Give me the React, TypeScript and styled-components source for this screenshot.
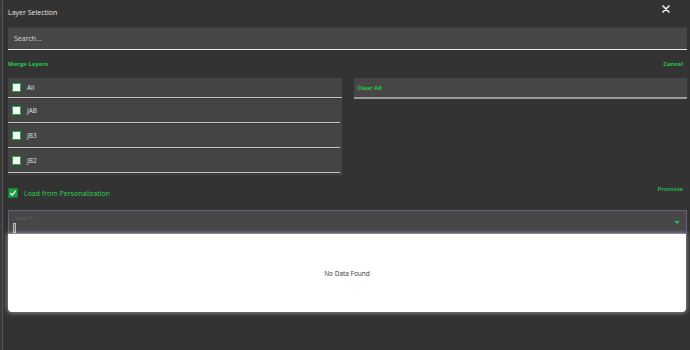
import * as React from "react";
import styled, { createGlobalStyle } from "styled-components";

const GlobalStyle = createGlobalStyle`
  html, body {
    margin: 0;
    padding: 0;
    background: #333333;
  }
  body {
    font-family: "Open Sans", "Liberation Sans", sans-serif;
  }
`;

const layers = ["JAB", "JB3", "JB2"];

export default function App() {
  return (
    <>
      <GlobalStyle />
      <Dialog>
        <Header>
          <Title>Layer Selection</Title>
          <CloseButton aria-label="close">
            <svg width="8" height="8" viewBox="0 0 8 8">
              <path d="M1 1 L7 7 M7 1 L1 7" stroke="#f2f2f2" strokeWidth="1.6" strokeLinecap="round" />
            </svg>
          </CloseButton>
        </Header>

        <SearchInput placeholder="Search..." />

        <ActionRow>
          <LinkButton $bold>Merge Layers</LinkButton>
          <LinkButton $bold>Cancel</LinkButton>
        </ActionRow>

        <Columns>
          <LayerPanel>
            <LayerRow $head>
              <Box />
              <RowLabel>All</RowLabel>
            </LayerRow>
            {layers.map(name => (
              <LayerRow key={name}>
                <Box />
                <RowLabel>{name}</RowLabel>
              </LayerRow>
            ))}
          </LayerPanel>
          <ClearPanel>
            <LinkButton $bold>Clear All</LinkButton>
          </ClearPanel>
        </Columns>

        <OptionRow>
          <CheckLabel>
            <CheckedBox>
              <svg width="8" height="8" viewBox="0 0 8 8">
                <path d="M1.3 4.2 L3.2 6 L6.8 1.8" stroke="#fff" strokeWidth="1.3" fill="none" />
              </svg>
            </CheckedBox>
            Load from Personalization
          </CheckLabel>
          <PromoteButton>Promote</PromoteButton>
        </OptionRow>

        <Select>
          <SelectBody>
            <SelectPlaceholder>Search</SelectPlaceholder>
            <Caret />
          </SelectBody>
          <Caret as="span" $arrow />
        </Select>
        <DropPanel>
          <EmptyText>No Data Found</EmptyText>
        </DropPanel>
      </Dialog>
    </>
  );
}

const Dialog = styled.div`
  width: 690px;
  height: 350px;
  box-sizing: border-box;
  background: #333333;
  border-left: 2px solid #3a3a3a;
  box-shadow: inset 1px 0 0 #565656;
  padding: 0 3px 0 6px;
  display: flex;
  flex-direction: column;
`;

const Header = styled.div`
  height: 27px;
  display: flex;
  align-items: center;
  justify-content: space-between;
`;

const Title = styled.div`
  font-size: 7px;
  color: #e6e6e6;
  margin-top: -3px;
`;

const CloseButton = styled.div`
  width: 8px;
  height: 8px;
  margin-right: 17px;
  margin-top: -10px;
  display: flex;
`;

const SearchInput = styled.input`
  height: 23px;
  box-sizing: border-box;
  border: none;
  border-top: 1px solid #3c3c3c;
  border-bottom: 1px solid #e8e8e8;
  background: #474747;
  padding: 0 6px;
  font-family: "Open Sans", "Liberation Sans", sans-serif;
  font-size: 7px;
  color: #e0e0e0;
  outline: none;
  &::placeholder {
    color: #d8d8d8;
  }
`;

const ActionRow = styled.div`
  height: 28px;
  display: flex;
  align-items: center;
  justify-content: space-between;
  padding-right: 4px;
`;

const LinkButton = styled.span<{ $bold?: boolean }>`
  font-size: 6px;
  font-weight: ${p => (p.$bold ? 700 : 400)};
  color: #22c94c;
`;

const Columns = styled.div`
  display: grid;
  grid-template-columns: 334px 1fr;
  gap: 12px;
  align-items: start;
`;

const LayerPanel = styled.div`
  background: #444444;
  padding-bottom: 2px;
`;

const LayerRow = styled.div<{ $head?: boolean }>`
  height: ${p => (p.$head ? 19 : 24)}px;
  display: flex;
  align-items: center;
  gap: 6px;
  padding-left: 4px;
  border-bottom: 1px solid #c4c4c4;
  box-shadow: 0 1px 0 #383838;
  margin-right: ${p => (p.$head ? 0 : 2)}px;
`;

const Box = styled.span`
  width: 7px;
  height: 7px;
  background: #ffffff;
  border: 1px solid #16b13a;
  flex: none;
`;

const RowLabel = styled.span`
  font-size: 6.5px;
  color: #e2e2e2;
`;

const ClearPanel = styled.div`
  height: 19px;
  background: #464646;
  border-bottom: 2px solid #9a9a9a;
  display: flex;
  align-items: center;
  padding-left: 3px;
`;

const OptionRow = styled.div`
  height: 34px;
  margin-top: 1px;
  display: flex;
  align-items: center;
  justify-content: space-between;
  padding-right: 4px;
`;

const CheckLabel = styled.label`
  display: flex;
  align-items: center;
  gap: 6px;
  font-size: 7px;
  color: #2bd34c;
`;

const CheckedBox = styled.span`
  width: 10px;
  height: 10px;
  box-sizing: border-box;
  background: #18a23b;
  border: 1px solid #1a7a33;
  display: flex;
  align-items: center;
  justify-content: center;
`;

const PromoteButton = styled.span`
  font-size: 6px;
  font-weight: 600;
  color: #22c94c;
  align-self: flex-start;
  margin-top: 9px;
`;

const Select = styled.div`
  height: 24px;
  box-sizing: border-box;
  background: #474747;
  border: 1px solid #6c5c84;
  display: flex;
  align-items: flex-end;
  justify-content: space-between;
  padding: 0 6px 0 4px;
`;

const SelectBody = styled.div`
  display: flex;
  flex-direction: column;
  align-self: stretch;
  padding-top: 3px;
`;

const SelectPlaceholder = styled.span`
  font-size: 6px;
  color: #606060;
  padding-left: 2px;
`;

const Caret = styled.span<{ $arrow?: boolean }>`
  width: ${p => (p.$arrow ? 0 : 1)}px;
  height: ${p => (p.$arrow ? 0 : 9)}px;
  margin-top: ${p => (p.$arrow ? 0 : 1)}px;
  margin-bottom: ${p => (p.$arrow ? 9 : 0)}px;
  border: ${p => (p.$arrow ? "none" : "1px solid #bdbdbd")};
  background: ${p => (p.$arrow ? "transparent" : "#6a6a6a")};
  ${p =>
    p.$arrow &&
    `
    border-left: 3px solid transparent;
    border-right: 3px solid transparent;
    border-top: 3px solid #1fc24a;
  `}
`;

const DropPanel = styled.div`
  height: 78px;
  margin-right: 1px;
  background: #ffffff;
  border-radius: 0 0 4px 4px;
  box-shadow: 0 0 4px 1px rgba(210, 210, 210, 0.55);
  display: flex;
  align-items: center;
  justify-content: center;
`;

const EmptyText = styled.span`
  font-size: 6.5px;
  color: #333333;
  margin-top: 1px;
`;
